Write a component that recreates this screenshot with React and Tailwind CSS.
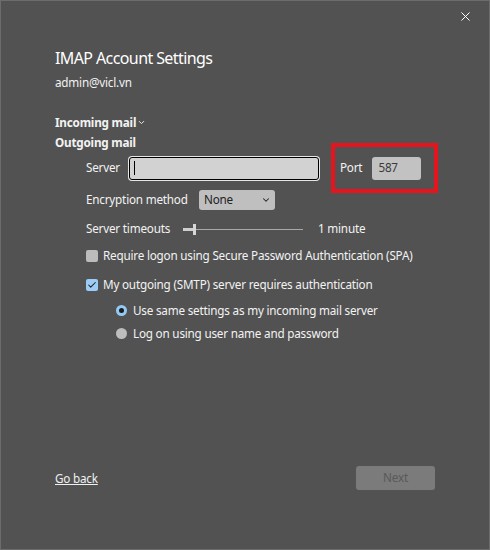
import { X, ChevronDown, Check } from "lucide-react";

function CheckBox({ checked, label }) {
  return (
    <div className="flex items-center h-[24px]">
      {checked ? (
        <span className="w-[12px] h-[12px] rounded-[2px] bg-[#9bcdf6] flex items-center justify-center">
          <Check size={10} strokeWidth={2.5} className="text-[#1f1f1f]" />
        </span>
      ) : (
        <span className="w-[12px] h-[12px] rounded-[2px] bg-[#bcbcbc]" />
      )}
      <span className="ml-[5px]">{label}</span>
    </div>
  );
}

function Radio({ selected, label }) {
  return (
    <div className="flex items-center h-[23px]">
      {selected ? (
        <span className="w-[11px] h-[11px] rounded-full bg-[#92c9f5] flex items-center justify-center">
          <span className="w-[5px] h-[5px] rounded-full bg-[#1c1c1c]" />
        </span>
      ) : (
        <span className="w-[11px] h-[11px] rounded-full bg-[#bdbdbd]" />
      )}
      <span className="ml-[6px]">{label}</span>
    </div>
  );
}

export default function App() {
  return (
    <div
      className="w-[490px] h-[550px] bg-[#525252] border border-[#6c6c6c] flex flex-col text-[11.7px] tracking-[-0.2px] text-[#f2f2f2]"
      style={{ fontFamily: '"Noto Sans", "Open Sans", sans-serif' }}
    >
      <div className="flex justify-end pt-[8px] pr-[16px] h-[30px]">
        <X size={15} strokeWidth={1.6} className="text-white" />
      </div>

      <div className="pl-[54px] flex flex-col">
        <h1 className="text-[16px] tracking-[-0.6px] leading-[24px] mt-[15px] text-white">IMAP Account Settings</h1>
        <div className="leading-[20px] mt-[2px]">admin@vicl.vn</div>

        <div className="font-bold leading-[20px] mt-[20px] flex items-center">
          Incoming mail
          <ChevronDown size={9} strokeWidth={2.5} className="ml-[1px] mt-[1px]" />
        </div>
        <div className="font-bold leading-[20px]">Outgoing mail</div>

        <div className="pl-[31px] flex flex-col">
          <div className="flex items-center h-[24px] mt-[4px]">
            <span className="w-[43px]">Server</span>
            <div className="w-[190px] h-[23px] rounded-[3px] border border-black bg-[#d2d2d2] ring-1 ring-[#e6e6e6] flex items-center pl-[4px]">
              <span className="w-px h-[14px] bg-black" />
            </div>
            <div className="ml-[12px] h-[50px] w-[107px] border-4 border-[#e5141d] flex items-center pl-[5px]">
              <span>Port</span>
              <div className="ml-[10px] w-[49px] h-[23px] rounded-[3px] bg-[#c2c2c2] text-[#3a3a3a] flex items-center pl-[6px]">
                587
              </div>
            </div>
          </div>

          <div className="flex items-center h-[24px] mt-[8px]">
            <span className="w-[113px]">Encryption method</span>
            <div className="w-[76px] h-[20px] rounded-[3px] bg-[#bfbfbf] text-[#222] flex items-center justify-between pl-[5px] pr-[4px]">
              <span>None</span>
              <ChevronDown size={10} strokeWidth={2.5} />
            </div>
          </div>

          <div className="flex items-center h-[24px] mt-[5px]">
            <span className="w-[97px]">Server timeouts</span>
            <div className="relative w-[120px] h-[12px] flex items-center">
              <span className="w-[10px] h-[3px] bg-[#cfcfcf]" />
              <span className="w-[3px] h-[11px] bg-[#d6d6d6]" />
              <span className="flex-1 h-px bg-[#a8a8a8]" />
            </div>
            <span className="ml-[15px]">1 minute</span>
          </div>

          <div className="mt-[3px]">
            <CheckBox label="Require logon using Secure Password Authentication (SPA)" />
          </div>
          <div className="mt-[5px]">
            <CheckBox checked label="My outgoing (SMTP) server requires authentication" />
          </div>

          <div className="pl-[30px] mt-[2px]">
            <Radio selected label="Use same settings as my incoming mail server" />
            <Radio label="Log on using user name and password" />
          </div>
        </div>
      </div>

      <div className="mt-auto mb-[59px] pl-[54px] pr-[54px] flex items-center justify-between">
        <a className="underline text-[#f0f0f0] mt-[1px]">Go back</a>
        <button className="w-[79px] h-[24px] rounded-[3px] bg-[#7b7b7b] text-[#595959]">Next</button>
      </div>
    </div>
  );
}
